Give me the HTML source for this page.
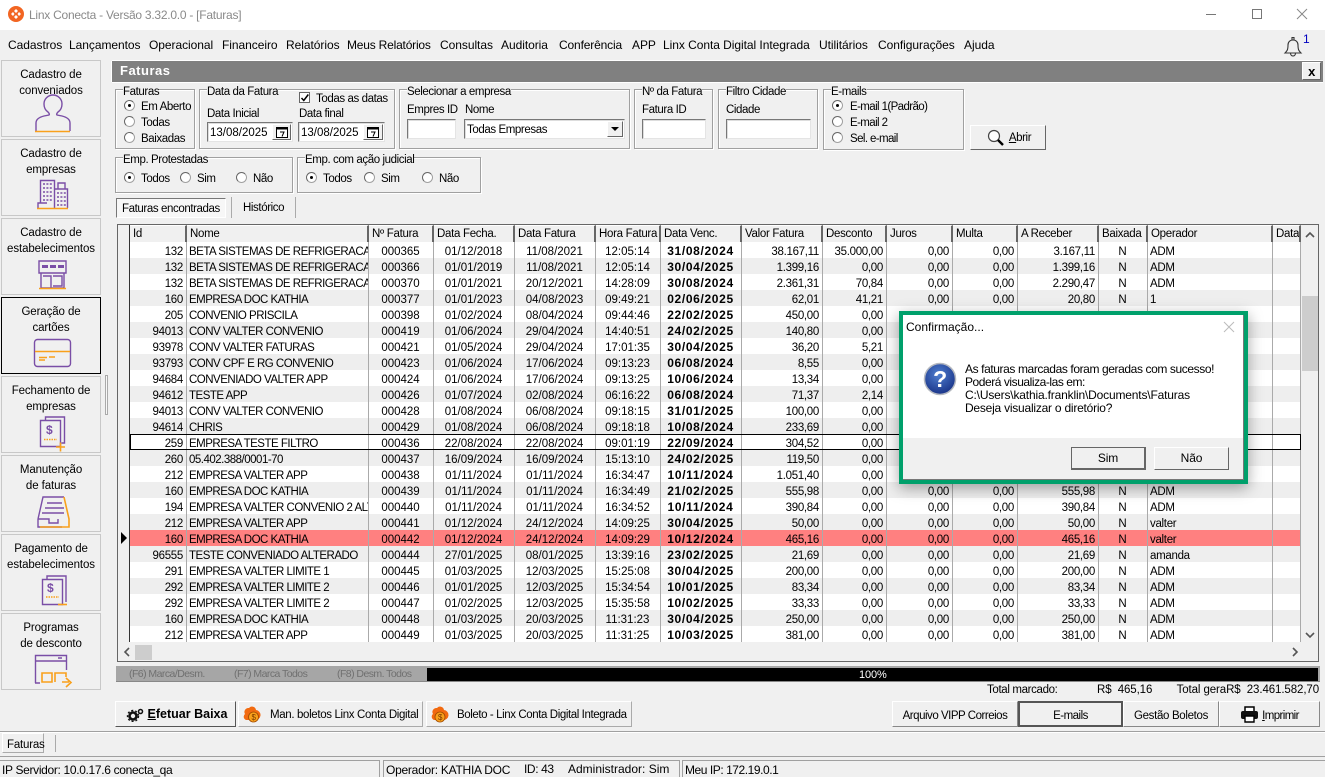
<!DOCTYPE html>
<html lang="pt"><head><meta charset="utf-8"><title>Linx Conecta</title>
<style>
*{box-sizing:border-box}
html,body{margin:0;padding:0}
body{width:1325px;height:777px;position:relative;overflow:hidden;background:#f0f0f0;font:11.5px/14px "Liberation Sans",sans-serif;letter-spacing:-.4px;color:#000}
.t,.g,.i,.b,.r,.s,svg.a{position:absolute}
.t{white-space:nowrap;line-height:18px}
.x{line-height:14px}
.m{top:38px;font-size:12px;letter-spacing:-.05px;line-height:14px}
.d{letter-spacing:0}
.e{letter-spacing:-.6px}
.g{border:1px solid #a0a0a0;box-shadow:1px 1px 0 #fff,inset 1px 1px 0 #fff}
.g>span{position:absolute;top:-5px;left:7px;background:#f0f0f0;white-space:nowrap;line-height:14px}
.i{background:#fff;border:1px solid;border-color:#777 #e4e4e4 #e4e4e4 #777;box-shadow:inset 1px 1px 0 #ddd}
.r{width:11px;height:11px;border-radius:50%;background:#fff;border:1px solid #a0a0a0;border-top-color:#666;border-left-color:#666}
.r.on::after{content:"";position:absolute;left:3px;top:3px;width:3px;height:3px;border-radius:50%;background:#000}
.b{background:#f0f0f0;border:1px solid;border-color:#fff #666 #666 #fff;box-shadow:0 0 0 1px #ddd;text-align:center;white-space:nowrap}
.s{left:1px;width:100px;height:77px;border:1px solid #c8c8c8;background:#f0f0f0;text-align:center;line-height:16px;padding-top:6px;letter-spacing:-.1px}
.s.sel{border:1px solid #000}
.s svg{position:absolute;left:0;top:0}
.pu{fill:none;stroke:#7a4ea6;stroke-width:1.4}
.or{fill:none;stroke:#f9a01b;stroke-width:1.6}
table{position:absolute;left:130px;top:225px;width:1171px;table-layout:fixed;border-collapse:separate;border-spacing:0;background:#fff}
th{height:17px;padding:0 2px 0 3px;font-weight:400;text-align:left;background:#f0f0f0;border-right:2px solid #666;border-top:1px solid #fff;overflow:hidden;white-space:nowrap;line-height:16px;letter-spacing:-.3px}
td{height:16px;padding:4px 3px 0 2px;border-right:1px solid #aaa;overflow:hidden;white-space:nowrap;line-height:12px;letter-spacing:0;vertical-align:top}
tbody tr:nth-child(even){background:#eee}
tbody tr.red{background:#ff8080}
td:nth-child(2){letter-spacing:-.5px}
td:nth-child(1),td:nth-child(8),td:nth-child(9),td:nth-child(10),td:nth-child(11),td:nth-child(12){text-align:right;letter-spacing:-.3px}
td:nth-child(3),td:nth-child(4),td:nth-child(5),td:nth-child(6),td:nth-child(7),td:nth-child(13){text-align:center}
td:nth-child(14){letter-spacing:-.3px}
td:nth-child(7){font-weight:700;font-size:12px;letter-spacing:.65px;padding-top:2px;line-height:14px}
</style></head><body>

<!-- title bar -->
<div class="t" style="left:0;top:0;width:1325px;height:30px;background:#fff"></div>
<svg class="a" style="left:8px;top:6px" width="16" height="16" viewBox="0 0 16 16"><circle cx="8" cy="8" r="8" fill="#f26522"/><path d="M8 3l2 2-2 2-2-2zM8 9l2 2-2 2-2-2zM3 8l2-2 1.5 2L5 10zM13 8l-2-2-1.5 2 1.5 2z" fill="#fff"/></svg>
<div class="t x" style="left:29px;top:8px;color:#8a8a8a;font-size:12px;letter-spacing:-.25px">Linx Conecta - Versão 3.32.0.0 - [Faturas]</div>
<svg class="a" style="left:1200px;top:5px" width="115" height="20"><path d="M6 9.5h10" stroke="#777"/><rect x="52.5" y="4.5" width="9" height="9" fill="none" stroke="#777"/><path d="M97 4l10 10M107 4l-10 10" stroke="#888"/></svg>

<!-- menu -->
<div class="t m" style="left:8px">Cadastros</div>
<div class="t m" style="left:69px">Lançamentos</div>
<div class="t m" style="left:149px">Operacional</div>
<div class="t m" style="left:222px">Financeiro</div>
<div class="t m" style="left:286px">Relatórios</div>
<div class="t m" style="left:347px;letter-spacing:-.2px">Meus Relatórios</div>
<div class="t m" style="left:440px">Consultas</div>
<div class="t m" style="left:501px">Auditoria</div>
<div class="t m" style="left:559px;letter-spacing:-.15px">Conferência</div>
<div class="t m" style="left:632px">APP</div>
<div class="t m" style="left:663px">Linx Conta Digital Integrada</div>
<div class="t m" style="left:819px">Utilitários</div>
<div class="t m" style="left:878px">Configurações</div>
<div class="t m" style="left:964px">Ajuda</div>
<svg class="a" style="left:1283px;top:34px" width="20" height="24" viewBox="0 0 20 24"><path d="M2 19c2-2 3-3 3-8 0-3 2-5 5-5s5 2 5 5c0 5 1 6 3 8zM9 6V3.5h2V6M7.5 19c0 4 5 4 5 0" fill="none" stroke="#333" stroke-width="1.1"/></svg>
<div class="t x" style="left:1303px;top:32px;color:#0000c0;font-size:12px">1</div>

<!-- sidebar -->
<div class="s" style="top:60px">Cadastro de<br>conveniados<svg width="98" height="75"><path class="pu" d="M34 70V62c0-4 4-6 8-7l5-1c1-1 0-2-1-3-3-2-4-5-4-8 0-5 4-9 9-9s9 4 9 9c0 3-1 6-4 8-1 1-2 2-1 3l5 1c4 1 8 3 8 7v8"/><path class="or" d="M33 70.500h35"/></svg></div>
<div class="s" style="top:139px">Cadastro de<br>empresas<svg width="98" height="75"><path class="pu" d="M38.500 63V40.500h14V68M52 49h13.500v19M56 49v-6h7v6M36 68v-5h9"/><path class="pu" d="M41 44h9M41 48h9M41 52h9M41 56h9M41 60h9M55 53h9M55 57h9M55 61h9M55 65h9" stroke-dasharray="2 1.400" stroke-width="1.600"/><path class="or" d="M35 68.500h31" stroke-width="2"/></svg></div>
<div class="s" style="top:218px">Cadastro de<br>estabelecimentos<svg width="98" height="75"><path class="pu" d="M37 42h27v12H37zM39 54v15h23V54M41 57h8v12h-8M51 57h9v10h-9"/><path d="M40 46h6v3h-6zM48 46h6v3h-6zM56 46h6v3h-6z" fill="#7a4ea6"/><path class="or" d="M37 69.500h27"/></svg></div>
<div class="s sel" style="top:297px">Geração de<br>cartões<svg width="98" height="75"><rect class="pu" x="32.500" y="41.500" width="36" height="27" rx="3"/><path class="or" d="M33 53.500h35"/><path class="or" d="M37 59.500h8M47 59h6M37 62h6" stroke-width="1.200"/></svg></div>
<div class="s" style="top:376px">Fechamento de<br>empresas<svg width="98" height="75"><path class="pu" d="M38.500 43.500h20v26h-20zM43.500 43v-3h19v26h-3"/><path class="or" d="M42 62.500h13" stroke-dasharray="1.500 1" stroke-width="2.500"/><path class="or" d="M54 70h9M58.500 65.500v9" stroke-width="1.800"/><text x="44" y="57" font-size="12" font-weight="700" fill="#7a4ea6" font-family="Liberation Sans">$</text></svg></div>
<div class="s" style="top:455px">Manutenção<br>de faturas<svg width="98" height="75"><path class="pu" d="M36 63l5-22h21M36 63v8h24M45 47h15M43 52h19M40 57h22M36 63h11v4h9v-4"/><path class="or" d="M62 41l5 22v8H38"/></svg></div>
<div class="s" style="top:534px">Pagamento de<br>estabelecimentos<svg width="98" height="75"><path class="pu" d="M40.500 44.500h20v25h-20zM45 44v-3h19v26"/><path class="or" d="M44 62h13" stroke-dasharray="1.500 1" stroke-width="2.500"/><path class="or" d="M56 69.500h9" stroke-width="1.800"/><text x="45" y="57" font-size="12" font-weight="700" fill="#7a4ea6" font-family="Liberation Sans">$</text></svg></div>
<div class="s" style="top:613px">Programas<br>de desconto<svg width="98" height="75"><path class="pu" d="M33.500 69V41.500h31V56M33 47h31M56 44h4M33 69h5"/><path class="or" d="M40 59h10v9H40zM53 68V59h11v4M60 68h7M64 64l5 4.500-5 4.500" stroke-width="1.700"/></svg></div>
<div class="t" style="left:105px;top:375px;width:3px;height:40px;border:1px solid #aaa;background:#f8f8f8"></div>

<!-- header -->
<div class="t" style="left:112px;top:61px;width:1211px;height:21px;background:#808080;box-shadow:0 -1px 0 #fff,0 1px 0 #fff,-1px 0 0 #fff"></div>
<div class="t x" style="left:120px;top:64px;color:#fff;font-weight:700;font-size:13px;letter-spacing:.5px">Faturas</div>
<div class="b" style="left:1302px;top:62px;width:19px;height:18px;font-weight:700;line-height:17px;box-shadow:none;font-size:13px">x</div>

<!-- filters -->
<div class="g" style="left:115px;top:89px;width:80px;height:60px"><span>Faturas</span></div>
<div class="r on" style="left:124px;top:100px"></div><div class="t" style="left:141px;top:98px">Em Aberto</div>
<div class="r" style="left:124px;top:116px"></div><div class="t" style="left:141px;top:114px">Todas</div>
<div class="r" style="left:124px;top:132px"></div><div class="t" style="left:141px;top:130px">Baixadas</div>

<div class="g" style="left:199px;top:89px;width:196px;height:60px"><span>Data da Fatura</span></div>
<div class="t" style="left:299px;top:92px;width:11px;height:11px;background:#fff;border:1px solid #666"></div>
<svg class="a" style="left:300px;top:93px" width="10" height="10"><path d="M1.500 5l2.300 2.500 4.500-6" fill="none" stroke="#000" stroke-width="1.500"/></svg>
<div class="t" style="left:316px;top:90px">Todas as datas</div>
<div class="t" style="left:207px;top:105px">Data Inicial</div>
<div class="t" style="left:299px;top:105px">Data final</div>
<div class="i" style="left:207px;top:122px;width:86px;height:20px"></div>
<div class="t d" style="left:210px;top:124px">13/08/2025</div>
<div class="b" style="left:272px;top:124px;width:19px;height:16px;box-shadow:none"></div>
<svg class="a" style="left:276px;top:125px" width="12" height="13"><rect x=".5" y="2.500" width="11" height="10" fill="#fff" stroke="#000"/><path d="M0 2.500h12v2H0z" fill="#000"/><path d="M4 7h4l-2 4.500" fill="none" stroke="#000"/></svg>
<div class="i" style="left:298px;top:122px;width:87px;height:20px"></div>
<div class="t d" style="left:301px;top:124px">13/08/2025</div>
<div class="b" style="left:363px;top:124px;width:20px;height:16px;box-shadow:none"></div>
<svg class="a" style="left:367px;top:125px" width="12" height="13"><rect x=".5" y="2.500" width="11" height="10" fill="#fff" stroke="#000"/><path d="M0 2.500h12v2H0z" fill="#000"/><path d="M4 7h4l-2 4.500" fill="none" stroke="#000"/></svg>

<div class="g" style="left:399px;top:89px;width:231px;height:60px"><span>Selecionar a empresa</span></div>
<div class="t" style="left:407px;top:101px">Empres ID</div>
<div class="t" style="left:465px;top:101px">Nome</div>
<div class="i" style="left:407px;top:119px;width:49px;height:20px"></div>
<div class="i" style="left:464px;top:119px;width:161px;height:20px"></div>
<div class="t" style="left:467px;top:121px">Todas Empresas</div>
<div class="b" style="left:607px;top:121px;width:16px;height:16px;box-shadow:none"></div>
<svg class="a" style="left:611px;top:127px" width="9" height="5"><path d="M0 0h8L4 4z" fill="#000"/></svg>

<div class="g" style="left:634px;top:89px;width:79px;height:60px"><span>Nº da Fatura</span></div>
<div class="t" style="left:642px;top:101px">Fatura ID</div>
<div class="i" style="left:642px;top:119px;width:64px;height:20px"></div>

<div class="g" style="left:718px;top:89px;width:100px;height:60px"><span>Filtro Cidade</span></div>
<div class="t" style="left:726px;top:101px">Cidade</div>
<div class="i" style="left:726px;top:119px;width:85px;height:20px"></div>

<div class="g" style="left:823px;top:89px;width:141px;height:61px"><span>E-mails</span></div>
<div class="r on" style="left:832px;top:100px"></div><div class="t e" style="left:850px;top:98px">E-mail 1(Padrão)</div>
<div class="r" style="left:832px;top:116px"></div><div class="t e" style="left:850px;top:114px">E-mail 2</div>
<div class="r" style="left:832px;top:132px"></div><div class="t e" style="left:850px;top:130px">Sel. e-mail</div>

<div class="b" style="left:970px;top:125px;width:76px;height:25px;box-shadow:none;line-height:25px;padding-left:24px"><u>A</u>brir</div>
<svg class="a" style="left:987px;top:129px" width="18" height="18"><circle cx="7" cy="7" r="5.500" fill="#fff" stroke="#444" stroke-width="1.200"/><path d="M11 11l5 5" stroke="#000" stroke-width="2.400"/></svg>

<div class="g" style="left:115px;top:157px;width:178px;height:36px"><span>Emp. Protestadas</span></div>
<div class="r on" style="left:124px;top:172px"></div><div class="t" style="left:141px;top:170px">Todos</div>
<div class="r" style="left:180px;top:172px"></div><div class="t" style="left:197px;top:170px">Sim</div>
<div class="r" style="left:236px;top:172px"></div><div class="t" style="left:253px;top:170px">Não</div>

<div class="g" style="left:297px;top:157px;width:184px;height:36px"><span>Emp. com ação judicial</span></div>
<div class="r on" style="left:306px;top:172px"></div><div class="t" style="left:323px;top:170px">Todos</div>
<div class="r" style="left:364px;top:172px"></div><div class="t" style="left:381px;top:170px">Sim</div>
<div class="r" style="left:422px;top:172px"></div><div class="t" style="left:439px;top:170px">Não</div>

<!-- tabs -->
<div class="t" style="left:116px;top:198px;width:110px;height:20px;background:#f7f7f7;border:1px solid;border-color:#777 #fff #fff #777;padding:1px 0 0 5px">Faturas encontradas</div>
<div class="t" style="left:231px;top:197px;width:1px;height:21px;background:#aaa"></div>
<div class="t" style="left:243px;top:199px">Histórico</div>
<div class="t" style="left:295px;top:197px;width:1px;height:21px;background:#aaa"></div>

<!-- grid -->
<div class="t" style="left:117px;top:224px;width:1202px;height:438px;border:1px solid #666;background:#f0f0f0"></div>
<div class="t" style="left:129px;top:225px;width:1px;height:417px;background:#333"></div>
<table>
<colgroup><col style="width:57px"><col style="width:182px"><col style="width:65px"><col style="width:81px"><col style="width:81px"><col style="width:65px"><col style="width:81px"><col style="width:81px"><col style="width:64px"><col style="width:66px"><col style="width:65px"><col style="width:81px"><col style="width:49px"><col style="width:125px"><col style="width:28px"></colgroup>
<thead><tr><th>Id</th><th>Nome</th><th>Nº Fatura</th><th>Data Fecha.</th><th>Data Fatura</th><th>Hora Fatura</th><th>Data Venc.</th><th>Valor Fatura</th><th>Desconto</th><th>Juros</th><th>Multa</th><th>A Receber</th><th>Baixada</th><th>Operador</th><th>Data</th></tr></thead>
<tbody>
<tr><td>132</td><td>BETA SISTEMAS DE REFRIGERACAO</td><td>000365</td><td>01/12/2018</td><td>11/08/2021</td><td>12:05:14</td><td>31/08/2024</td><td>38.167,11</td><td>35.000,00</td><td>0,00</td><td>0,00</td><td>3.167,11</td><td>N</td><td>ADM</td><td></td></tr>
<tr><td>132</td><td>BETA SISTEMAS DE REFRIGERACAO</td><td>000366</td><td>01/01/2019</td><td>11/08/2021</td><td>12:05:14</td><td>30/04/2025</td><td>1.399,16</td><td>0,00</td><td>0,00</td><td>0,00</td><td>1.399,16</td><td>N</td><td>ADM</td><td></td></tr>
<tr><td>132</td><td>BETA SISTEMAS DE REFRIGERACAO</td><td>000370</td><td>01/01/2021</td><td>20/12/2021</td><td>14:28:09</td><td>30/08/2024</td><td>2.361,31</td><td>70,84</td><td>0,00</td><td>0,00</td><td>2.290,47</td><td>N</td><td>ADM</td><td></td></tr>
<tr><td>160</td><td>EMPRESA DOC KATHIA</td><td>000377</td><td>01/01/2023</td><td>04/08/2023</td><td>09:49:21</td><td>02/06/2025</td><td>62,01</td><td>41,21</td><td>0,00</td><td>0,00</td><td>20,80</td><td>N</td><td>1</td><td></td></tr>
<tr><td>205</td><td>CONVENIO PRISCILA</td><td>000398</td><td>01/02/2024</td><td>08/04/2024</td><td>09:44:46</td><td>22/02/2025</td><td>450,00</td><td>0,00</td><td></td><td></td><td></td><td></td><td></td><td></td></tr>
<tr><td>94013</td><td>CONV VALTER CONVENIO</td><td>000419</td><td>01/06/2024</td><td>29/04/2024</td><td>14:40:51</td><td>24/02/2025</td><td>140,80</td><td>0,00</td><td></td><td></td><td></td><td></td><td></td><td></td></tr>
<tr><td>93978</td><td>CONV VALTER FATURAS</td><td>000421</td><td>01/05/2024</td><td>29/04/2024</td><td>17:01:35</td><td>30/04/2025</td><td>36,20</td><td>5,21</td><td></td><td></td><td></td><td></td><td></td><td></td></tr>
<tr><td>93793</td><td>CONV CPF E RG CONVENIO</td><td>000423</td><td>01/06/2024</td><td>17/06/2024</td><td>09:13:23</td><td>06/08/2024</td><td>8,55</td><td>0,00</td><td></td><td></td><td></td><td></td><td></td><td></td></tr>
<tr><td>94684</td><td>CONVENIADO VALTER APP</td><td>000424</td><td>01/06/2024</td><td>17/06/2024</td><td>09:13:25</td><td>10/06/2024</td><td>13,34</td><td>0,00</td><td></td><td></td><td></td><td></td><td></td><td></td></tr>
<tr><td>94612</td><td>TESTE APP</td><td>000426</td><td>01/07/2024</td><td>02/08/2024</td><td>06:16:22</td><td>06/08/2024</td><td>71,37</td><td>2,14</td><td></td><td></td><td></td><td></td><td></td><td></td></tr>
<tr><td>94013</td><td>CONV VALTER CONVENIO</td><td>000428</td><td>01/08/2024</td><td>06/08/2024</td><td>09:18:15</td><td>31/01/2025</td><td>100,00</td><td>0,00</td><td></td><td></td><td></td><td></td><td></td><td></td></tr>
<tr><td>94614</td><td>CHRIS</td><td>000429</td><td>01/08/2024</td><td>06/08/2024</td><td>09:18:18</td><td>10/08/2024</td><td>233,69</td><td>0,00</td><td></td><td></td><td></td><td></td><td></td><td></td></tr>
<tr><td>259</td><td>EMPRESA TESTE FILTRO</td><td>000436</td><td>22/08/2024</td><td>22/08/2024</td><td>09:01:19</td><td>22/09/2024</td><td>304,52</td><td>0,00</td><td></td><td></td><td></td><td></td><td></td><td></td></tr>
<tr><td>260</td><td>05.402.388/0001-70</td><td>000437</td><td>16/09/2024</td><td>16/09/2024</td><td>15:13:10</td><td>24/02/2025</td><td>119,50</td><td>0,00</td><td></td><td></td><td></td><td></td><td></td><td></td></tr>
<tr><td>212</td><td>EMPRESA VALTER APP</td><td>000438</td><td>01/11/2024</td><td>01/11/2024</td><td>16:34:47</td><td>10/11/2024</td><td>1.051,40</td><td>0,00</td><td></td><td></td><td></td><td></td><td></td><td></td></tr>
<tr><td>160</td><td>EMPRESA DOC KATHIA</td><td>000439</td><td>01/11/2024</td><td>01/11/2024</td><td>16:34:49</td><td>21/02/2025</td><td>555,98</td><td>0,00</td><td>0,00</td><td>0,00</td><td>555,98</td><td>N</td><td>ADM</td><td></td></tr>
<tr><td>194</td><td>EMPRESA VALTER CONVENIO 2 ALTERADO</td><td>000440</td><td>01/11/2024</td><td>01/11/2024</td><td>16:34:52</td><td>10/11/2024</td><td>390,84</td><td>0,00</td><td>0,00</td><td>0,00</td><td>390,84</td><td>N</td><td>ADM</td><td></td></tr>
<tr><td>212</td><td>EMPRESA VALTER APP</td><td>000441</td><td>01/12/2024</td><td>24/12/2024</td><td>14:09:25</td><td>30/04/2025</td><td>50,00</td><td>0,00</td><td>0,00</td><td>0,00</td><td>50,00</td><td>N</td><td>valter</td><td></td></tr>
<tr class="red"><td>160</td><td>EMPRESA DOC KATHIA</td><td>000442</td><td>01/12/2024</td><td>24/12/2024</td><td>14:09:29</td><td>10/12/2024</td><td>465,16</td><td>0,00</td><td>0,00</td><td>0,00</td><td>465,16</td><td>N</td><td>valter</td><td></td></tr>
<tr><td>96555</td><td>TESTE CONVENIADO ALTERADO</td><td>000444</td><td>27/01/2025</td><td>08/01/2025</td><td>13:39:16</td><td>23/02/2025</td><td>21,69</td><td>0,00</td><td>0,00</td><td>0,00</td><td>21,69</td><td>N</td><td>amanda</td><td></td></tr>
<tr><td>291</td><td>EMPRESA VALTER LIMITE 1</td><td>000445</td><td>01/03/2025</td><td>12/03/2025</td><td>15:25:08</td><td>30/04/2025</td><td>200,00</td><td>0,00</td><td>0,00</td><td>0,00</td><td>200,00</td><td>N</td><td>ADM</td><td></td></tr>
<tr><td>292</td><td>EMPRESA VALTER LIMITE 2</td><td>000446</td><td>01/01/2025</td><td>12/03/2025</td><td>15:34:54</td><td>10/01/2025</td><td>83,34</td><td>0,00</td><td>0,00</td><td>0,00</td><td>83,34</td><td>N</td><td>ADM</td><td></td></tr>
<tr><td>292</td><td>EMPRESA VALTER LIMITE 2</td><td>000447</td><td>01/02/2025</td><td>12/03/2025</td><td>15:35:58</td><td>10/02/2025</td><td>33,33</td><td>0,00</td><td>0,00</td><td>0,00</td><td>33,33</td><td>N</td><td>ADM</td><td></td></tr>
<tr><td>160</td><td>EMPRESA DOC KATHIA</td><td>000448</td><td>01/03/2025</td><td>20/03/2025</td><td>11:31:23</td><td>30/04/2025</td><td>250,00</td><td>0,00</td><td>0,00</td><td>0,00</td><td>250,00</td><td>N</td><td>ADM</td><td></td></tr>
<tr><td>212</td><td>EMPRESA VALTER APP</td><td>000449</td><td>01/03/2025</td><td>20/03/2025</td><td>11:31:25</td><td>10/03/2025</td><td>381,00</td><td>0,00</td><td>0,00</td><td>0,00</td><td>381,00</td><td>N</td><td>ADM</td><td></td></tr>
</tbody></table>
<div class="t" style="left:130px;top:434px;width:1171px;height:16px;border:1px solid #000"></div>
<svg class="a" style="left:120px;top:532px" width="8" height="12"><path d="M1 0l6 6-6 6z" fill="#000"/></svg>

<!-- scrollbars -->
<div class="t" style="left:1301px;top:225px;width:17px;height:419px;background:#f0f0f0"></div>
<div class="t" style="left:1302px;top:296px;width:16px;height:75px;background:#cdcdcd"></div>
<svg class="a" style="left:1305px;top:231px" width="10" height="8"><path d="M1 6l4-4 4 4" fill="none" stroke="#555" stroke-width="1.600"/></svg>
<svg class="a" style="left:1305px;top:631px" width="10" height="8"><path d="M1 2l4 4 4-4" fill="none" stroke="#555" stroke-width="1.600"/></svg>
<div class="t" style="left:135px;top:645px;width:17px;height:15px;background:#cdcdcd"></div>
<svg class="a" style="left:123px;top:647px" width="8" height="10"><path d="M6 1L2 5l4 4" fill="none" stroke="#555" stroke-width="1.600"/></svg>
<svg class="a" style="left:1291px;top:647px" width="8" height="10"><path d="M2 1l4 4-4 4" fill="none" stroke="#555" stroke-width="1.600"/></svg>

<!-- progress -->
<div class="t" style="left:116px;top:666px;width:1204px;height:16px;background:#a6a6a6;border-bottom:1px solid #888"></div>
<div class="t" style="left:427px;top:668px;width:891px;height:13px;background:#000"></div>
<div class="t x" style="left:859px;top:668px;color:#fff;font-size:11px;letter-spacing:-.1px">100%</div>
<div class="t x" style="left:129px;top:667px;color:#707070;font-size:10.500px;letter-spacing:-.55px">(F6) Marca/Desm.</div>
<div class="t x" style="left:234px;top:667px;color:#707070;font-size:10.500px;letter-spacing:-.55px">(F7) Marca Todos</div>
<div class="t x" style="left:337px;top:667px;color:#707070;font-size:10.500px;letter-spacing:-.55px">(F8) Desm. Todos</div>

<div class="t" style="left:987px;top:681px;letter-spacing:-.35px">Total marcado:</div>
<div class="t" style="left:1097px;top:681px;letter-spacing:-.1px">R$&nbsp; 465,16</div>
<div class="t" style="right:6px;top:681px;letter-spacing:-.1px">Total geraR$&nbsp; 23.461.582,70</div>

<!-- buttons -->
<div class="b" style="left:115px;top:701px;width:121px;height:26px;font-weight:700;line-height:25px;padding-left:24px;font-size:12.500px;letter-spacing:0;box-shadow:none;border-color:#fff #555 #555 #fff"><u>E</u>fetuar Baixa</div>
<svg class="a" style="left:126px;top:708px" width="18" height="14"><circle cx="7" cy="8" r="3.500" fill="none" stroke="#111" stroke-width="2.600"/><circle cx="7" cy="8" r="5.500" fill="none" stroke="#111" stroke-width="1.400" stroke-dasharray="2 2"/><circle cx="14.500" cy="3.500" r="2" fill="none" stroke="#111" stroke-width="1.500"/></svg>
<div class="b" style="left:238px;top:701px;width:185px;height:26px;line-height:26px;padding-left:31px;text-align:left;letter-spacing:-.35px;box-shadow:none;border-color:#fff #aaa #aaa #fff">Man. boletos Linx Conta Digital</div>
<svg class="a" style="left:241px;top:705px" width="20" height="19"><path d="M4 9a4 4 0 0 1 4-6 4 4 0 0 1 7 2 5 5 0 0 1-1 10H5a3.500 3.500 0 0 1-1-6z" fill="#f26a10"/><circle cx="12.500" cy="12" r="5" fill="#f9a01b" stroke="#a04a00" stroke-width=".8"/><text x="10.500" y="15" font-size="8" fill="#7a3a00" font-family="Liberation Sans">$</text></svg>
<div class="b" style="left:426px;top:701px;width:206px;height:26px;line-height:26px;padding-left:30px;text-align:left;letter-spacing:-.41px;box-shadow:none;border-color:#fff #aaa #aaa #fff">Boleto - Linx Conta Digital Integrada</div>
<svg class="a" style="left:429px;top:705px" width="20" height="19"><path d="M4 9a4 4 0 0 1 4-6 4 4 0 0 1 7 2 5 5 0 0 1-1 10H5a3.500 3.500 0 0 1-1-6z" fill="#f26a10"/><circle cx="11" cy="12" r="5" fill="#f9a01b" stroke="#a04a00" stroke-width=".8"/><text x="9" y="15" font-size="8" fill="#7a3a00" font-family="Liberation Sans">$</text></svg>
<div class="b" style="left:892px;top:701px;width:126px;height:26px;line-height:28px;letter-spacing:-.48px;box-shadow:none;border-color:#fff #888 #888 #fff">Arquivo VIPP Correios</div>
<div class="b" style="left:1018px;top:701px;width:105px;height:26px;line-height:26px;letter-spacing:-.5px;box-shadow:none;border:2px solid;border-color:#555">E-mails</div>
<div class="b" style="left:1123px;top:701px;width:96px;height:26px;line-height:28px;letter-spacing:-.33px;box-shadow:none;border-color:#fff #888 #888 #fff">Gestão Boletos</div>
<div class="b" style="left:1219px;top:701px;width:101px;height:26px;line-height:28px;padding-left:22px;letter-spacing:-.6px;box-shadow:none;border-color:#fff #888 #888 #fff"><u>I</u>mprimir</div>
<svg class="a" style="left:1241px;top:706px" width="17" height="17"><path d="M4 1h9v5H4z" fill="#fff" stroke="#000" stroke-width="1.500"/><rect x="0" y="5" width="17" height="8" rx="2" fill="#111"/><path d="M4 10h9v6H4z" fill="#fff" stroke="#000" stroke-width="1.400"/></svg>

<!-- bottom -->
<div class="t" style="left:0;top:731px;width:1325px;height:26px;border-top:1px solid #a0a0a0;border-bottom:1px solid #a0a0a0;box-shadow:inset 0 1px 0 #fff"></div>
<div class="t" style="left:2px;top:733px;width:42px;height:20px;border:1px solid;border-color:#fff #aaa #aaa #fff;padding:2px 0 0 4px;letter-spacing:-.2px">Faturas</div>
<div class="t" style="left:55px;top:735px;width:1px;height:17px;background:#aaa"></div>
<div class="t x" style="left:0;top:760px;width:380px;height:17px;border-top:1px solid #a0a0a0;border-right:1px solid #a0a0a0;padding:2px 0 0 2px;font-size:12px;letter-spacing:-.33px">IP Servidor: 10.0.17.6 conecta_qa</div>
<div class="t x" style="left:383px;top:760px;width:297px;height:17px;border-top:1px solid #a0a0a0;border-left:1px solid #a0a0a0;border-right:1px solid #a0a0a0;padding:2px 0 0 2px;font-size:12px;letter-spacing:-.25px">Operador: KATHIA DOC</div>
<div class="t x" style="left:524px;top:762px;font-size:12px;letter-spacing:-.4px">ID: 43</div>
<div class="t x" style="left:568px;top:762px;font-size:12px;letter-spacing:0">Administrador: Sim</div>
<div class="t x" style="left:682px;top:760px;width:643px;height:17px;border-top:1px solid #a0a0a0;border-left:1px solid #a0a0a0;padding:2px 0 0 2px;font-size:12px;letter-spacing:-.45px">Meu IP: 172.19.0.1</div>

<!-- dialog -->
<div class="t" style="left:899px;top:311px;width:349px;height:173px;border:4px solid #00a06b;background:#fff;box-shadow:0 4px 14px rgba(0,0,0,.35)"></div>
<div class="t" style="left:903px;top:315px;width:341px;height:165px;border-right:1px solid #777;border-bottom:1px solid #777"></div>
<div class="t" style="left:903px;top:438px;width:340px;height:41px;background:#f0f0f0"></div>
<div class="t x" style="left:906px;top:320px;font-size:12px;letter-spacing:0">Confirmação...</div>
<svg class="a" style="left:1223px;top:321px" width="12" height="12"><path d="M1 1l10 10M11 1L1 11" stroke="#bbb"/></svg>
<svg class="a" style="left:923px;top:362px" width="34" height="34" viewBox="0 0 34 34"><defs><radialGradient id="q" cx=".45" cy=".35" r=".75"><stop offset="0" stop-color="#4f7fd0"/><stop offset="1" stop-color="#12297e"/></radialGradient></defs><circle cx="17" cy="17" r="15.500" fill="url(#q)" stroke="#b4b8c0" stroke-width="1.500"/><text x="17" y="25" font-size="23" font-weight="700" text-anchor="middle" fill="#fff" font-family="Liberation Sans">?</text></svg>
<div class="t" style="left:965px;top:363px;line-height:13px;font-size:12px;letter-spacing:0"><span style="letter-spacing:-.4px">As faturas marcadas foram geradas com sucesso!</span><br><span style="letter-spacing:-.45px">Poderá visualiza-las em:</span><br><span style="letter-spacing:-.17px">C:\Users\kathia.franklin\Documents\Faturas</span><br><span style="letter-spacing:-.23px">Deseja visualizar o diretório?</span></div>
<div class="b" style="left:1071px;top:447px;width:75px;height:23px;line-height:21px;font-size:12px;letter-spacing:-.1px;box-shadow:none;border:1px solid #666;border-right-width:2px;border-bottom-width:2px">Sim</div>
<div class="b" style="left:1154px;top:447px;width:75px;height:23px;line-height:21px;font-size:12px;letter-spacing:-.1px;box-shadow:none">Não</div>
</body></html>
